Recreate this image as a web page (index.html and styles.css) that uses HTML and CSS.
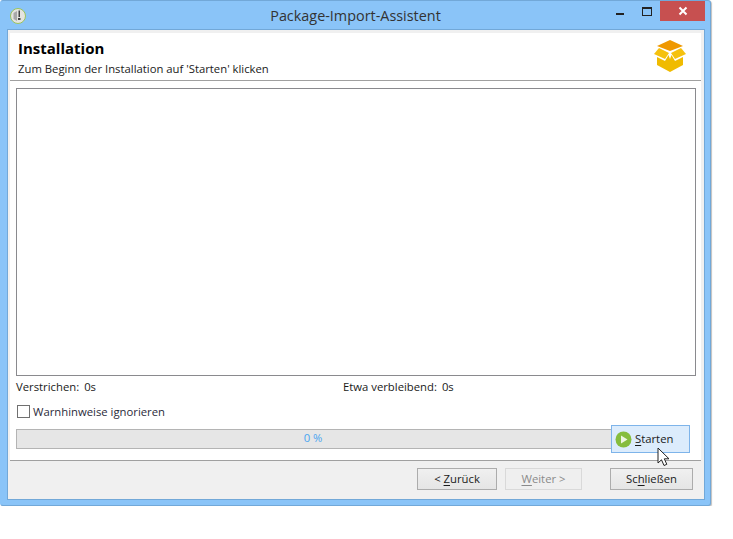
FILE: index.html
```html
<!DOCTYPE html>
<html lang="de">
<head>
    <meta charset="UTF-8">
    <title>Package-Import-Assistent</title>
    <link rel="stylesheet" href="styles.css">
</head>
<body>

    <div class="window">
        <!-- Title bar -->
        <div class="titlebar">
            <svg class="app-icon" width="18" height="18" viewBox="0 0 18 18">
                <circle cx="9" cy="9" r="7.5" fill="#e4e4e0" stroke="#9cc45c" stroke-width="1"/>
                <path d="M4.500 6 L8 4 V14 L4.500 12 Z" fill="#a8a8a8"/>
                <path d="M9.500 3.500 H11 V10 H9.500 Z M9 11 H11.500 V13 H9 Z" fill="#444"/>
            </svg>
            <div class="title">Package-Import-Assistent</div>
            <div class="caption">
                <span class="cap-btn"><i class="min-glyph"></i></span>
                <span class="cap-btn"><i class="max-glyph"></i></span>
                <span class="cap-btn close">
                    <svg width="10" height="10" viewBox="0 0 10 10"><path d="M1.500 1.500 L8.500 8.500 M8.500 1.500 L1.500 8.500" stroke="#fff" stroke-width="2"/></svg>
                </span>
            </div>
        </div>

        <div class="client">
            <!-- Header -->
            <div class="header">
                <div class="header-text">
                    <h1>Installation</h1>
                    <p>Zum Beginn der Installation auf 'Starten' klicken</p>
                </div>
                <svg class="logo" width="32" height="32" viewBox="0 0 32 32">
                    <path d="M16 0 L29 6 L16 11 L3 6 Z" fill="#ef9800"/>
                    <path d="M5 8 L15 13 L11 19 L0 14 Z" fill="#f5c10e"/>
                    <path d="M27 8 L17 13 L21 19 L32 14 Z" fill="#f5c10e"/>
                    <path d="M3 17 L11 21 L14.500 15 L16 19 L17.500 15 L21 21 L29 17 V25 L16 32 L3 25 Z" fill="#f0bb00"/>
                </svg>
            </div>

            <div class="content">
                <div class="log-box"></div>

                <div class="times">
                    <div class="time time-left"><span>Verstrichen:</span><span>0s</span></div>
                    <div class="time"><span>Etwa verbleibend:</span><span>0s</span></div>
                </div>

                <label class="check-row">
                    <span class="checkbox"></span>
                    <span>Warnhinweise ignorieren</span>
                </label>

                <div class="progress-row">
                    <div class="progress">0 %</div>
                    <div class="start-btn">
                        <svg width="17" height="17" viewBox="0 0 17 17">
                            <circle cx="8.500" cy="8.500" r="8" fill="#86bd3e"/>
                            <path d="M6 4.500 L12.500 8.500 L6 12.500 Z" fill="#eef6e2"/>
                        </svg>
                        <span class="start-label"><u>S</u>tarten</span>
                        <svg class="cursor" width="14" height="21" viewBox="0 0 14 21">
                            <path d="M1 1 V16 L4.500 12.800 L7 18.500 L9.800 17.300 L7.300 11.800 L12 11.800 Z" fill="#fff" stroke="#222" stroke-width="1"/>
                        </svg>
                    </div>
                </div>
            </div>

            <!-- Footer buttons -->
            <div class="footer">
                <div class="btn btn-back">&lt; <u>Z</u>urück</div>
                <div class="btn btn-next disabled"><u>W</u>eiter &gt;</div>
                <div class="btn btn-close">Sc<u>h</u>ließen</div>
            </div>
        </div>
    </div>

</body>
</html>
```
FILE: styles.css
```css
/* Global Styles */
body {
    margin: 0;
    padding: 0;
    background-color: #ffffff;
    font-family: 'Open Sans', 'Noto Sans', sans-serif;
    font-size: 11.3px;
    color: #1a1a1a;
}

/* Window frame */
.window {
    width: 711px;
    height: 506px;
    background-color: #8ac4f8;
    border: 1px solid #72a8d8;
    border-left-color: #8ac4f8;
    border-radius: 3px;
    box-sizing: border-box;
    display: flex;
    flex-direction: column;
    box-shadow: 1px 1px 1px rgba(0, 0, 0, 0.25);
}

/* Title bar */
.titlebar {
    height: 29px;
    display: flex;
    align-items: flex-start;
    position: relative;
    flex-shrink: 0;
}

.app-icon {
    margin: 6px 0 0 8px;
}

.title {
    position: absolute;
    left: 0;
    right: 0;
    top: 5px;
    text-align: center;
    font-size: 14.4px;
    line-height: 19px;
    color: #333;
}

.caption {
    margin-left: auto;
    margin-right: 5px;
    display: flex;
    position: relative;
}

.cap-btn {
    width: 28px;
    height: 20px;
    display: flex;
    align-items: center;
    justify-content: center;
}

.min-glyph {
    width: 8px;
    height: 2px;
    margin: 6px 0 0 4px;
    background-color: #222;
}

.max-glyph {
    width: 8px;
    height: 6px;
    margin-left: 2px;
    border: 1px solid #222;
    border-top-width: 2px;
}

.cap-btn.close {
    width: 45px;
    background-color: #c75050;
}

/* Client area */
.client {
    flex: 1;
    margin: 0 6px 6px 7px;
    border-top: 3px solid #f0f0f0;
    border-left: 2px solid #f0f0f0;
    border-right: 3px solid #f0f0f0;
    background-color: #ffffff;
    display: flex;
    flex-direction: column;
    outline: 1px solid #72a8d8;
}

.header {
    height: 47px;
    padding: 0 6px 0 8px;
    border-bottom: 1px solid #a0a0a0;
    display: flex;
    justify-content: space-between;
    flex-shrink: 0;
}

.header h1 {
    margin: 5px 0 0 0;
    font-size: 15px;
    line-height: 20px;
    font-weight: 700;
    color: #000;
}

.header p {
    margin: 3px 0 0 0;
    line-height: 15px;
}

.logo {
    margin: 7px 9px 0 0;
}

.content {
    flex: 1;
    padding: 7px 5px 0 6px;
    display: flex;
    flex-direction: column;
}

.log-box {
    height: 286px;
    border: 1px solid #8a8a8e;
    background-color: #ffffff;
}

.times {
    display: flex;
    margin-top: 3px;
    line-height: 15px;
}

.time {
    display: flex;
    gap: 5px;
}

.time-left {
    width: 327px;
}

.check-row {
    display: flex;
    align-items: center;
    gap: 3px;
    margin: 10px 0 0 1px;
    line-height: 15px;
    color: #2a2a3a;
}

.checkbox {
    width: 11px;
    height: 11px;
    border: 1px solid #707070;
    background-color: #ffffff;
}

.progress-row {
    display: flex;
    align-items: center;
    margin-top: 6px;
    padding-right: 6px;
}

.progress {
    flex: 1;
    height: 18px;
    line-height: 16px;
    padding-right: 2px;
    border: 1px solid #b4b4b4;
    background-color: #e6e6e6;
    text-align: center;
    color: #4aa5f0;
}

.start-btn {
    width: 74px;
    height: 26px;
    margin-left: -1px;
    border: 1px solid #7eb4ea;
    background-color: #dcecfc;
    display: flex;
    align-items: center;
    gap: 3px;
    padding-left: 3px;
    position: relative;
}

.start-label {
    margin-bottom: 2px;
}

.start-btn u,
.btn u {
    text-underline-offset: 2px;
}

.cursor {
    position: absolute;
    left: 45px;
    top: 21px;
}

/* Footer */
.footer {
    height: 39px;
    margin-top: auto;
    border-top: 1px solid #a0a0a0;
    background-color: #f0f0f0;
    display: flex;
    align-items: flex-start;
    padding-top: 7px;
    box-sizing: border-box;
    flex-shrink: 0;
}

.btn {
    height: 20px;
    line-height: 20px;
    text-align: center;
    border: 1px solid #acacac;
    background: linear-gradient(#f0f0f0, #e5e5e5);
    color: #1a1a1a;
}

.btn-back {
    width: 78px;
    margin-left: 407px;
}

.btn-next {
    width: 75px;
    margin-left: 8px;
}

.btn-close {
    width: 81px;
    margin-left: 28px;
}

.btn.disabled {
    background: #efefef;
    border-color: #d9d9d9;
    color: #8a8a8a;
}
```
